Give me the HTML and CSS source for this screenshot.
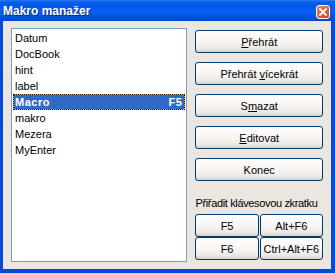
FILE: index.html
```html
<!DOCTYPE html>
<html lang="cs">

<head>
    <meta charset="UTF-8">
    <title>Makro manažer</title>
    <link rel="stylesheet" href="styles.css">
</head>

<body>
    <div class="okno">
        <div class="titulek">
            <span class="nazev">Makro manažer</span>
            <span class="zavrit">
                <svg width="8" height="8" viewBox="0 0 8 8">
                    <path d="M1 1 L7 7 M7 1 L1 7" stroke="#fff" stroke-width="1.8" stroke-linecap="square" />
                </svg>
            </span>
        </div>
        <div class="obsah">
            <ul class="seznam">
                <li>Datum</li>
                <li>DocBook</li>
                <li>hint</li>
                <li>label</li>
                <li class="vybrany"><span>Macro</span><span>F5</span></li>
                <li>makro</li>
                <li>Mezera</li>
                <li>MyEnter</li>
            </ul>
            <div class="ovladani">
                <button><u>P</u>řehrát</button>
                <button>Přehrát <u>v</u>ícekrát</button>
                <button>S<u>m</u>azat</button>
                <button><u>E</u>ditovat</button>
                <button>Konec</button>
                <div class="popisek">Přiřadit klávesovou zkratku</div>
                <div class="zkratky">
                    <button>F5</button>
                    <button>Alt+F6</button>
                    <button>F6</button>
                    <button>Ctrl+Alt+F6</button>
                </div>
            </div>
        </div>
    </div>
</body>

</html>
```

FILE: styles.css
```css
body {
    margin: 0;
    font-family: "Liberation Sans", Arial, sans-serif;
    font-size: 11px;
}

.okno {
    width: 335px;
    height: 273px;
    display: flex;
    flex-direction: column;
    background-color: #0848d8;
}

.titulek {
    height: 21px;
    display: flex;
    justify-content: space-between;
    align-items: flex-start;
    padding: 0 5px 0 3px;
    background: linear-gradient(#2a7cf6 0, #0a5fec 2px, #0356ea 6px, #0a5ef0 12px, #0052e0 17px, #0246d2 21px);
}

.nazev {
    margin-top: 4px;
    color: #fff;
    font-weight: bold;
    font-size: 12px;
    text-shadow: 1px 1px 0 #0a2a8a;
}

.zavrit {
    margin-top: 5px;
    width: 12px;
    height: 12px;
    display: flex;
    align-items: center;
    justify-content: center;
    border: 1px solid #fff;
    border-radius: 3px;
    background: linear-gradient(135deg, #e98468, #d8401c);
}

.obsah {
    flex: 1;
    display: flex;
    gap: 8px;
    margin: 0 4px 4px 3px;
    padding: 7px 8px;
    background-color: #ece6e0;
}

.seznam {
    list-style: none;
    margin: 0;
    padding: 1px;
    width: 177px;
    box-sizing: border-box;
    border: 1px solid #7f9db9;
    background-color: #fff;
}

.seznam li {
    height: 16px;
    box-sizing: border-box;
    border: 1px solid transparent;
    padding: 0 2px 0 1px;
    line-height: 15px;
    display: flex;
    justify-content: space-between;
}

.seznam li.vybrany {
    color: #fff;
    font-weight: bold;
    letter-spacing: 0.5px;
    border: 1px dotted #1a1a1a;
    background: linear-gradient(#316ac5, #316ac5) padding-box, linear-gradient(#d9a93b, #d9a93b) border-box;
}

.ovladani {
    width: 128px;
    padding-top: 2px;
    display: flex;
    flex-direction: column;
    gap: 9px;
}

button {
    height: 23px;
    padding: 0;
    font-family: inherit;
    font-size: 11px;
    color: #000;
    border: 1px solid #003c74;
    border-radius: 3px;
    background: linear-gradient(#fff, #f6f3f1 60%, #ece6e0 85%, #d9d0c8);
}

.popisek {
    margin-top: 6px;
    margin-bottom: -5px;
    line-height: 14px;
    white-space: nowrap;
    letter-spacing: -0.35px;
}

.zkratky {
    display: grid;
    grid-template-columns: 1fr 1fr;
    gap: 0 1px;
}
```
